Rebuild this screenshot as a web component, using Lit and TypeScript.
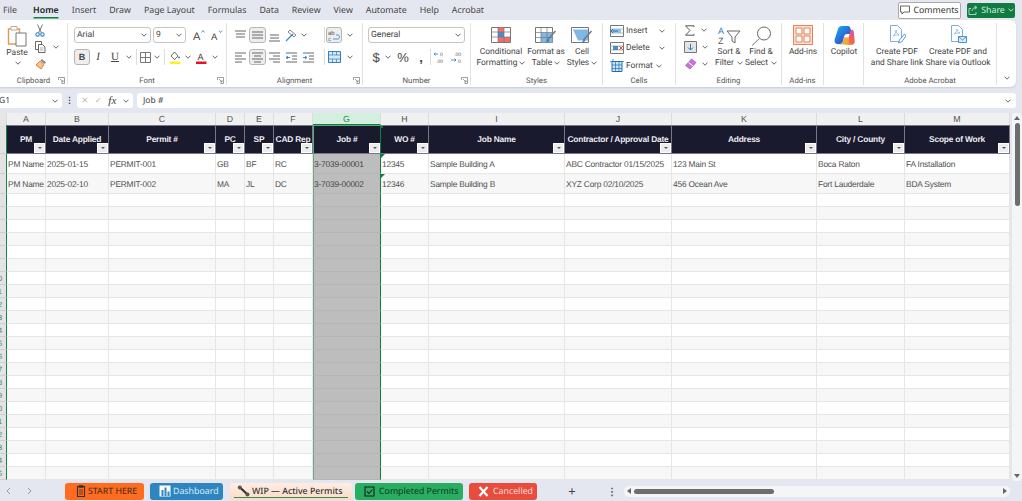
import { LitElement, html, svg, css, nothing } from 'lit';
import { customElement } from 'lit/decorators.js';

const MENU = ['File', 'Home', 'Insert', 'Draw', 'Page Layout', 'Formulas', 'Data', 'Review', 'View', 'Automate', 'Help', 'Acrobat'];

const COLS = [
    { l: 'A', w: 39, h: 'PM' },
    { l: 'B', w: 63, h: 'Date Applied' },
    { l: 'C', w: 107, h: 'Permit #' },
    { l: 'D', w: 29, h: 'PC' },
    { l: 'E', w: 29, h: 'SP' },
    { l: 'F', w: 39, h: 'CAD Rep' },
    { l: 'G', w: 68, h: 'Job #' },
    { l: 'H', w: 48, h: 'WO #' },
    { l: 'I', w: 136, h: 'Job Name' },
    { l: 'J', w: 107, h: 'Contractor / Approval Date' },
    { l: 'K', w: 145, h: 'Address' },
    { l: 'L', w: 88, h: 'City / County' },
    { l: 'M', w: 105, h: 'Scope of Work' },
];

const ROWS = [
    ['PM Name', '2025-01-15', 'PERMIT-001', 'GB', 'BF', 'RC', '3-7039-00001', '12345', 'Sample Building A', 'ABC Contractor 01/15/2025', '123 Main St', 'Boca Raton', 'FA Installation'],
    ['PM Name', '2025-02-10', 'PERMIT-002', 'MA', 'JL', 'DC', '3-7039-00002', '12346', 'Sample Building B', 'XYZ Corp 02/10/2025', '456 Ocean Ave', 'Fort Lauderdale', 'BDA System'],
];

const SEL = 6; // column G
const TEMPLATE = `7px ${COLS.map((c) => c.w + 'px').join(' ')}`;

const chev = html`<svg class="chev" width="6" height="4" viewBox="0 0 6 4"><path d="M.5.7 3 3.2 5.5.7" fill="none" stroke="#555" stroke-width=".9"/></svg>`;
const launcher = html`<svg class="launch" width="7" height="7" viewBox="0 0 7 7"><path d="M.5 3V.5H6.500V6.500H3.500M2 2l3 3M5 3v2H3" fill="none" stroke="#777" stroke-width=".7"/></svg>`;

const lines = (ys: number[][]) => html`<svg width="13" height="13" viewBox="0 0 13 13">${ys.map(([x1, x2, y]) => svg`<path d="M${x1} ${y}H${x2}" stroke="#666" stroke-width="1"/>`)}</svg>`;

const ICON = {
    paste: html`<svg width="20" height="22" viewBox="0 0 20 22"><path d="M1.500 4h11v15h-11z" fill="#fff" stroke="#e8964f" stroke-width="1.400"/><path d="M4 1.500h6V5H4z" fill="#fff" stroke="#b9aea2"/><path d="M9 8h10v13H9z" fill="#fff" stroke="#777"/></svg>`,
    cut: html`<svg width="10" height="13" viewBox="0 0 10 13"><path d="M2.500 .5 6.500 9M7.500 .5 3.500 9" stroke="#777" fill="none"/><circle cx="2.600" cy="10.500" r="1.700" fill="none" stroke="#2f7fc1" stroke-width="1.100"/><circle cx="7.400" cy="10.500" r="1.700" fill="none" stroke="#2f7fc1" stroke-width="1.100"/></svg>`,
    copy: html`<svg width="12" height="12" viewBox="0 0 12 12"><path d="M.5.5h6v8h-6z" fill="#fff" stroke="#666"/><path d="M3.500 3.500h4l2.500 2.500v5.500H3.500z" fill="#fff" stroke="#666"/><path d="M5 7h3.500M5 9h3.500" stroke="#888" stroke-width=".7"/></svg>`,
    brush: html`<svg width="12" height="12" viewBox="0 0 12 12"><path d="m7 1 4 3.500-1.500 1.500L5.500 2.500z" fill="#888"/><path d="M5 3 9 6.500 6 11 1 7z" fill="#f4c28e" stroke="#e07b22" stroke-width=".9"/></svg>`,
    growA: html`<svg width="13" height="13" viewBox="0 0 13 13"><text x="0" y="10.500" font-family="Liberation Sans" font-size="11" fill="#444">A</text><path d="m8.500 3.500 1.500-2 1.500 2" fill="none" stroke="#2f7fc1" stroke-width=".8"/></svg>`,
    shrinkA: html`<svg width="13" height="13" viewBox="0 0 13 13"><text x="0" y="10.500" font-family="Liberation Sans" font-size="9.500" fill="#444">A</text><path d="m8 1.500 1.500 2 1.500-2" fill="none" stroke="#2f7fc1" stroke-width=".8"/></svg>`,
    border: html`<svg width="11" height="11" viewBox="0 0 11 11"><path d="M.5.500h10v10H.5zM5.500.5v10M.5 5.500h10" fill="none" stroke="#777"/></svg>`,
    fill: html`<svg width="12" height="13" viewBox="0 0 12 13"><path d="M5.500 1 9 5 5.500 8.500 2 5z" fill="none" stroke="#555" stroke-width=".9"/><circle cx="10" cy="6.500" r="1" fill="#2f7fc1"/><path d="M1 10.500h10.500v2.500H1z" fill="#ffee22"/></svg>`,
    color: html`<svg width="12" height="13" viewBox="0 0 12 13"><text x="2.500" y="8.600" font-family="Liberation Sans" font-size="9" fill="#444">A</text><path d="M1 10.500h10.500v2.500H1z" fill="#e81123"/></svg>`,
    alTop: lines([[1, 12, 2], [2, 11, 5], [2, 11, 8]]),
    alMid: lines([[1, 12, 3], [1, 12, 6], [1, 12, 9]]),
    alBot: lines([[2, 11, 6], [2, 11, 9], [1, 12, 12]]),
    left: lines([[1, 12, 2], [1, 8, 5], [1, 12, 8], [1, 8, 11]]),
    center: lines([[1, 12, 2], [3, 10, 5], [1, 12, 8], [3, 10, 11]]),
    right: lines([[1, 12, 2], [5, 12, 5], [1, 12, 8], [5, 12, 11]]),
    orient: html`<svg width="13" height="13" viewBox="0 0 13 13"><path d="M1 12 8 5" stroke="#2f8fd0" stroke-width="1.200"/><path d="m5 1 6 5-2 2-6-5z" fill="none" stroke="#666" stroke-width=".8"/></svg>`,
    indDec: html`<svg width="13" height="13" viewBox="0 0 13 13"><path d="M1 2h11M7 5h5M7 8h5M1 11h11" stroke="#666"/><path d="M5 6.500H1m2-1.500-2 1.500L3 8" fill="none" stroke="#2f8fd0"/></svg>`,
    indInc: html`<svg width="13" height="13" viewBox="0 0 13 13"><path d="M1 2h11M7 5h5M7 8h5M1 11h11" stroke="#666"/><path d="M1 6.500h4m-2-1.500 2 1.500L3 8" fill="none" stroke="#2f8fd0"/></svg>`,
    wrap: html`<svg width="14" height="13" viewBox="0 0 14 13"><text x="1" y="5.500" font-family="Liberation Sans" font-size="6" fill="#555">ab</text><text x="1" y="12.200" font-family="Liberation Sans" font-size="6" fill="#2f7fc1">c</text><path d="M6 10h5c2 0 2-4 0-4H9" fill="none" stroke="#2f8fd0" stroke-width=".9"/></svg>`,
    merge: html`<svg width="13" height="12" viewBox="0 0 13 12"><path d="M.5.500h12v11H.5z" fill="#d7eaf8" stroke="#2f7fc1"/><path d="M.5 4h12M.5 8h12M4.500.5V4M8.500.5V4M4.500 8v3.500M8.500 8v3.500" stroke="#2f7fc1" stroke-width=".7"/></svg>`,
    incDec: html`<svg width="14" height="13" viewBox="0 0 14 13"><path d="M5 3H1m1.500-1.500L1 3l1.500 1.500" fill="none" stroke="#2f8fd0" stroke-width=".9"/><text x="7" y="5" font-family="Liberation Sans" font-size="5" fill="#555">0</text><text x="3" y="11.500" font-family="Liberation Sans" font-size="5" fill="#555">.00</text></svg>`,
    decDec: html`<svg width="14" height="13" viewBox="0 0 14 13"><text x="4" y="5" font-family="Liberation Sans" font-size="5" fill="#555">.00</text><path d="M1 9h5M4.500 7.500 6 9l-1.500 1.500" fill="none" stroke="#2f8fd0" stroke-width=".9"/><text x="8" y="11.500" font-family="Liberation Sans" font-size="5" fill="#555">0</text></svg>`,
    cond: html`<svg width="20" height="16" viewBox="0 0 20 16"><path d="M.5.500h19v15H.5z" fill="#fff" stroke="#777"/><path d="M7 .5h6V5H7z" fill="#f26d6d"/><path d="M7 5h6v5H7z" fill="#3f8fd2"/><path d="M7 10h12v5H7z" fill="#f26d6d"/><path d="M7 .5v15M13 .5v15M.5 5h19M.5 10h19" stroke="#777" stroke-width=".7"/></svg>`,
    table: html`<svg width="22" height="18" viewBox="0 0 22 18"><path d="M.5.500h17v15H.5z" fill="#fff" stroke="#777"/><path d="M6 5.500h11.500v10H6z" fill="#7fb7e6"/><path d="M6 .5v15M12 .5v15M.5 5.500h17M.5 10.500h17" stroke="#777" stroke-width=".7"/><path d="m20.500 4-8 9" stroke="#777" stroke-width="1.500"/><path d="m13 12-2.500 4 4-2z" fill="#2f7fc1"/></svg>`,
    styles: html`<svg width="22" height="18" viewBox="0 0 22 18"><path d="M.5.500h17v15H.5z" fill="#fff" stroke="#777"/><path d="M2 2.500h15v11H7z" fill="#7fb7e6"/><path d="m20.500 4-8 9" stroke="#777" stroke-width="1.500"/><path d="m13 12-2.500 4 4-2z" fill="#2f7fc1"/></svg>`,
    insert: html`<svg width="14" height="12" viewBox="0 0 14 12"><path d="M.5.500h13v11H.5z" fill="#fff" stroke="#777"/><path d="M.5 4h13M.5 8h13" stroke="#999" stroke-width=".7"/><path d="M3 4h8v4H3z" fill="#8cc4ee"/><path d="M8 6H1m2-2L1 6l2 2" fill="none" stroke="#1f6fb5"/></svg>`,
    del: html`<svg width="14" height="12" viewBox="0 0 14 12"><path d="M.5.500h13v11H.5z" fill="#fff" stroke="#777"/><path d="M.5 4h13M.5 8h13" stroke="#999" stroke-width=".7"/><path d="M3 4h5v4H3z" fill="#3f8fd2"/><path d="m9 4 4 4m0-4-4 4" stroke="#e04a3f"/></svg>`,
    format: html`<svg width="14" height="13" viewBox="0 0 14 13"><path d="M2 2.500h10v10H2z" fill="#cfe5f7" stroke="#1f6fb5"/><path d="M2 6h10M2 9.500h10M5.500 2.500v10M9 2.500v10M0 2.500h14M3 0v2" stroke="#1f6fb5" stroke-width=".7"/></svg>`,
    sigma: html`<svg width="12" height="11" viewBox="0 0 12 11"><path d="M10 2V.8H1.500L6 5.500 1.500 10.200H10V9" fill="none" stroke="#555"/></svg>`,
    down: html`<svg width="13" height="12" viewBox="0 0 13 12"><path d="M.5.500h12v11H.5z" fill="#e4e4e4" stroke="#777"/><path d="M6.500 3v6M4 6.500 6.500 9 9 6.500" fill="none" stroke="#1f7fc8"/></svg>`,
    clear: html`<svg width="13" height="12" viewBox="0 0 13 12"><path d="M7.500 1 12 4.500 6 11 1.500 7.500z" fill="#c774d8" stroke="#a34fb8" stroke-width=".7"/><path d="M4.500 4.500 9 8" stroke="#fff"/></svg>`,
    sort: html`<svg width="23" height="20" viewBox="0 0 23 20"><text x="0" y="8.200" font-family="Liberation Sans" font-size="9" fill="#2f7fc1">A</text><text x="0" y="18" font-family="Liberation Sans" font-size="9" fill="#555">Z</text><path d="M9 5h13l-5 6v6l-3-2v-4z" fill="#fff" stroke="#666"/></svg>`,
    find: html`<svg width="21" height="20" viewBox="0 0 21 20"><circle cx="13" cy="7.500" r="6.500" fill="#fff" stroke="#666"/><path d="M8.500 12.500 1 19.500" stroke="#777" stroke-width="1"/></svg>`,
    addins: html`<svg width="20" height="20" viewBox="0 0 20 20"><path d="M.5.500h19v19H.5z" fill="#fde3d6" stroke="#ec7f55"/><path d="M3 3h6v6H3zM11 3h6v6h-6zM3 11h6v6H3zM11 11h6v6h-6z" fill="#fff" stroke="#ec7f55"/></svg>`,
    copilot: html`<svg width="21" height="21" viewBox="0 0 21 21"><defs><linearGradient id="cpa" x1="0" y1="0" x2="1" y2="1"><stop offset="0" stop-color="#19b4e8"/><stop offset=".6" stop-color="#2c62d8"/><stop offset="1" stop-color="#6b3fd0"/></linearGradient><linearGradient id="cpb" x1="0" y1="1" x2="1" y2="0"><stop offset="0" stop-color="#f0d23a"/><stop offset=".4" stop-color="#ee6a4a"/><stop offset="1" stop-color="#d84fb0"/></linearGradient></defs><path d="M8 1h6c1.500 0 2 1 2.500 2.500L18 9h-5c-2 0-2.500 1-3 3l-1 4c-.5 2-1.500 3-3 3H4C1.500 19 0 17 .8 14L4 4c.6-2 2-3 4-3z" fill="url(#cpa)"/><path d="M11 20h6c2 0 3.200-1 3.800-3l-1-10c-.4-2-1.500-2.500-2.500-2-1.300.6-1.300 3-2.300 6l-1.500 5c-.5 1.500-1.500 2.500-2.500 4z" fill="url(#cpb)"/><path d="M3 19c3 .5 5 .5 8 .5 2 0 3-1 3.500-3l1-4H10l-1 4c-.5 2-2 2.500-6 2.500z" fill="#f0a93a"/></svg>`,
    pdfLink: html`<svg width="18" height="19" viewBox="0 0 18 19"><path d="M2.500.5h7l4 4v12h-11z" fill="#fff" stroke="#7aaee0"/><path d="M5 11c2-1 3-4 3-6 0 2 1 4 3 5-2 0-4 0-6 1z" fill="none" stroke="#7aaee0" stroke-width=".7"/><path d="m16.500 9-5 6-1 3 3-1 4.500-6z" fill="#fff" stroke="#4d8fd0" stroke-width=".9"/></svg>`,
    pdfMail: html`<svg width="18" height="19" viewBox="0 0 18 19"><path d="M2.500.5h7l4 4v12h-11z" fill="#fff" stroke="#7aaee0"/><path d="M5 9c2-1 3-4 3-5 0 2 1 3 3 4-2 0-4 0-6 1z" fill="none" stroke="#7aaee0" stroke-width=".7"/><path d="M9.500 11.500h8v6h-8z" fill="#dcebf8" stroke="#4d8fd0"/><path d="m9.500 11.500 4 3.500 4-3.500" fill="none" stroke="#4d8fd0"/></svg>`,
    comment: html`<svg width="10" height="10" viewBox="0 0 10 10"><path d="M.5 1h9v6H4L2 9V7H.5z" fill="none" stroke="#444" stroke-width=".8"/></svg>`,
    share: html`<svg width="10" height="10" viewBox="0 0 10 10"><path d="M3 3.500H1v6h7V7M4 6c0-2 1.500-3.500 4-3.500M6.500.8 9 2.500 6.500 4.300" fill="none" stroke="#cfe8da" stroke-width=".8"/></svg>`,
    tabClip: html`<svg width="10" height="12" viewBox="0 0 10 12"><path d="M1.500 1.500h7v10h-7z" fill="none" stroke="#333" stroke-width="1.100"/><path d="M3 .5h4v2H3zM3 5h4M3 7h4M3 9h4" fill="none" stroke="#333" stroke-width=".8"/></svg>`,
    tabChart: html`<svg width="12" height="12" viewBox="0 0 12 12"><path d="M.5.500h11v11H.5z" fill="#fff"/><path d="M2.500 5h2v6h-2zM5.500 2.500h2V11h-2zM8.500 6.500h2V11h-2z" fill="#2e86c1"/></svg>`,
    tabTool: html`<svg width="13" height="12" viewBox="0 0 13 12"><path d="m3 2.500 7.500 7" stroke="#333" stroke-width="2.200"/><circle cx="2.800" cy="2.500" r="2" fill="#555"/><circle cx="10.500" cy="9.500" r="2" fill="#555"/></svg>`,
    tabCheck: html`<svg width="11" height="11" viewBox="0 0 11 11"><path d="M1 1h9v9H1z" fill="none" stroke="#1d1d1d" stroke-width="1.100"/><path d="m3 5.500 2 2 3.500-4" fill="none" stroke="#1d1d1d" stroke-width="1.100"/></svg>`,
    tabX: html`<svg width="11" height="11" viewBox="0 0 11 11"><path d="m1.500 1 8 9m0-9-8 9" stroke="#fff" stroke-width="2.200"/></svg>`,
};

@customElement('app-root')
export class AppRoot extends LitElement {
    static styles = css`
        :host { display: block; width: 1022px; height: 501px; overflow: hidden; background: #e4e7ef; font-family: "Noto Sans", sans-serif; color: #444; text-rendering: geometricPrecision; }
        .top { display: flex; align-items: center; height: 20px; padding-left: 3px; font-size: 8.800px; }
        .menu { display: flex; gap: 13px; flex: 1; }
        .menu span { padding-bottom: 1px; }
        .menu .on { margin-left: 3px; color: #222; font-weight: 600; box-shadow: 0 2px 0 -0.5px #107c41; }
        .btn { display: flex; align-items: center; justify-content: center; gap: 3px; height: 15px; border-radius: 2px; }
        .comments { width: 61px; background: #fff; border: 1px solid #aaa; color: #333; margin-right: 6px; }
        .share { width: 48px; background: #107c41; color: #d9eee2; margin-right: 7px; }
        .share .chev path { stroke: #d9eee2; }

        .ribbon { display: flex; height: 67px; width: 1016px; padding-top: 3px; box-sizing: border-box; background: #fff; border-radius: 0 6px 6px 0; box-shadow: 0 1px 2px #c9ccd4; font-family: Roboto, "Noto Sans", sans-serif; font-size: 8.400px; }
        .grp { display: flex; flex-direction: column; height: 62px; border-right: 1px solid #e2e2e2; box-sizing: border-box; }
        .g-clip { width: 68px; } .g-font { width: 159px; } .g-align { width: 136px; } .g-num { width: 108px; }
        .g-styles { width: 132px; } .g-cells { width: 73px; } .g-edit { width: 106px; } .g-add { width: 42px; }
        .g-cop { width: 40px; } .g-acro { width: 133px; }
        .body { flex: 1; display: flex; min-height: 0; }
        .lab { display: grid; grid-template-columns: 1fr auto 1fr; align-items: center; height: 10px; color: #555; font-size: 7.800px; }
        .lab span { grid-column: 2; }
        .launch { grid-column: 3; justify-self: end; margin-right: 2px; }

        .pad-clip { padding: 2px 0 0 6px; gap: 7px; }
        .pad-row { flex-direction: column; padding-top: 4px; gap: 6px; }
        .g-font .pad-row { padding-left: 6px; }
        .g-align .pad-row { padding-left: 5px; }
        .g-num .pad-row { padding-left: 5px; }
        .paste { display: flex; flex-direction: column; align-items: center; width: 22px; line-height: 11px; }
        .paste span { margin-top: 1px; }
        .paste .chev { margin-top: 2px; }
        .stack { display: flex; flex-direction: column; margin-top: -1.500px; }
        .pad-clip .stack { margin-top: -3.500px; }
        .pad-clip .chev { margin-left: 2px; }
        .stack > div { display: flex; align-items: center; height: 17px; gap: 4px; }

        .row { display: flex; align-items: center; height: 16px; }
        .sel { display: flex; align-items: center; justify-content: space-between; box-sizing: border-box; height: 16px; padding: 0 3px 0 2px; background: #fff; border: 1px solid #c4c4c4; border-radius: 3px; font-size: 8.600px; }
        .s-font { width: 77px; margin-right: 2px; } .s-size { width: 33px; margin-right: 4px; } .s-num { width: 97px; }
        .c { display: flex; align-items: center; justify-content: center; height: 16px; flex: none; box-sizing: border-box; }
        .w4 { width: 4px; } .w5 { width: 5px; } .w8 { width: 8px; } .w10 { width: 10px; } .w14 { width: 14px; } .w16 { width: 16px; }
        .w17 { width: 17px; } .w18 { width: 18px; } .w22 { width: 22px; }
        .on-box { background: #eeeeee; border: 1px solid #b5b5b5; border-radius: 3px; }
        .sep::before { content: ""; width: 1px; height: 16px; background: #ddd; }
        .glyph { font-family: "Liberation Serif", serif; font-size: 11px; color: #444; }
        .bold { font-family: "Liberation Sans", sans-serif; font-weight: 700; font-size: 9px; }
        .under { text-decoration: underline; }
        .num-g { font-family: "Liberation Sans", sans-serif; font-size: 13px; color: #444; }

        .big { display: flex; flex-direction: column; align-items: center; padding-top: 2px; line-height: 11px; white-space: nowrap; flex: none; }
        .big .i { display: flex; align-items: flex-start; justify-content: center; height: 22px; box-sizing: border-box; }
        .g-styles .big .i { padding-top: 2px; }
        .g-edit .big .i { padding-top: 1px; }
        .g-styles .body { padding-left: 3px; }
        .b54 { width: 54px; } .b36 { width: 36px; } .b32 { width: 32px; } .b42 { width: 42px; } .b40 { width: 40px; } .b62 { width: 62px; } .b60 { width: 60px; }
        .g-acro .body { padding-left: 2px; }
        .cells { flex-direction: column; padding: 0 0 0 7px; }
        .cells > div { display: flex; align-items: center; height: 17.500px; gap: 2px; margin-top: 0; }
        .cells > div:first-child { margin-top: -1px; }
        .cells .chev { margin-left: auto; margin-right: 10px; }
        .cells .chev.near { margin-left: 1px; }
        .edit-col { width: 37px; padding-left: 8px; box-sizing: border-box; flex: none; }
        .g-edit .chev { margin-left: 1px; }
        .tail { flex: 1; display: flex; align-items: flex-end; justify-content: flex-end; padding: 0 6px 7px 0; }

        .fbar { display: flex; align-items: center; height: 15px; margin-top: 6px; gap: 3px; font-size: 8.500px; }
        .name { display: flex; align-items: center; justify-content: space-between; width: 62px; height: 15px; box-sizing: border-box; padding: 0 4px 0 0; background: #fff; border-radius: 0 3px 3px 0; }
        .name span { margin-left: -1px; }
        .dots { width: 9px; text-align: center; font-weight: 700; }
        .fx { display: flex; align-items: center; justify-content: space-around; width: 56px; height: 15px; background: #fff; border-radius: 3px; box-sizing: border-box; padding: 0 1px; color: #bbb; }
        .fx i { font-family: "Liberation Serif", serif; font-size: 11px; color: #333; }
        .input { display: flex; align-items: center; justify-content: space-between; width: 879px; height: 15px; margin-left: 1px; box-sizing: border-box; padding: 0 5px 0 6px; background: #fff; border-radius: 3px; }

        .sheet { display: flex; margin-top: 5px; height: 368px; }
        .grid { display: grid; width: 1010px; align-content: start; overflow: hidden; font-family: "Liberation Sans", Arial, sans-serif; font-size: 8.400px; letter-spacing: -0.200px; color: #505050; }
        .ch { height: 12px; background: #f0f0f0; border-right: 1px solid #dcdcdc; box-sizing: border-box; text-align: center; line-height: 12px; color: #555; font-size: 8.800px; letter-spacing: 0; }
        .ch.corner { background: #e6e6e6; }
        .ch.active { background: #d3f0df; color: #2b8a5a; border-bottom: 1px solid #107c41; }
        .rh { background: #e3e3e3; border-right: 1.500px solid #1f7f4f; box-sizing: border-box; overflow: hidden; font-size: 7.500px; color: #4a7f63; border-bottom: 1px solid #cfcfcf; display: flex; align-items: center; }
        .rh span { flex: none; width: 20px; margin-left: -12px; text-align: center; }
        .hd { position: relative; display: flex; align-items: center; justify-content: center; height: 29px; box-sizing: border-box; padding-bottom: 1px; background: #1a1a2e; color: #eceaf0; font-weight: 700; white-space: nowrap; border-right: 1px solid #77778a; border-top: 1px solid #77778a; border-bottom: 1px solid #77778a; overflow: hidden; }
        .hd.cur { border-left: 1px solid #5fa77e; border-right: 1px solid #107c41; border-top: 1px solid #5fa77e; }
        .hd.next::before { content: ""; position: absolute; left: 0; top: 0; width: 2px; height: 2px; background: #107c41; }
        .flt { position: absolute; right: 0; bottom: 0; display: flex; align-items: center; justify-content: center; width: 11px; height: 10px; box-sizing: border-box; background: #ececec; border: 1px solid #fff; }
        .flt::after { content: ""; border: 2px solid transparent; border-top: 2.500px solid #555; border-bottom: 0; }
        .td { position: relative; display: flex; align-items: center; box-sizing: border-box; padding-left: 1px; white-space: nowrap; overflow: hidden; background: #fff; border-right: 1px solid #e6e6e6; border-bottom: 1px solid #e6e6e6; }
        .td.alt { background: #f7f7f7; }
        .td.cur { padding-left: 0; color: #454545; background: #bdbdbd; border-left: 1px solid #6aa886; border-right: 1px solid #107c41; border-bottom-color: #b5b5b5; }
        .td.tri::before { content: ""; position: absolute; left: 0; top: 0; border: 2.500px solid transparent; border-top-color: #107c41; border-left-color: #107c41; }
        .r20 { height: 20px; padding-top: 1px; } .r13 { height: 13px; }
        .vbar { display: flex; flex-direction: column; align-items: center; width: 10px; height: 368px; margin-left: 2px; background: #f4f5f7; border-radius: 4px; box-sizing: border-box; padding-top: 3px; }
        .tup { border: 3px solid transparent; border-bottom: 4px solid #666; border-top: 0; }
        .tdn { border: 3px solid transparent; border-top: 4px solid #666; border-bottom: 0; margin-top: auto; margin-bottom: 3px; }
        .vthumb { width: 5px; height: 83px; margin-top: 3px; background: #6e6e6e; border-radius: 3px; }

        .tabs { display: flex; align-items: center; height: 20px; font-size: 8.800px; white-space: nowrap; }
        .nav { display: flex; align-items: center; justify-content: space-between; width: 26px; margin: 0 33px 0 6px; }
        .tab { position: relative; display: flex; align-items: center; height: 17px; border-radius: 3px; box-sizing: border-box; flex: none; gap: 2px; }
        .t-start { width: 79px; margin-right: 6px; padding-left: 11px; background: #ff6b1f; color: #3a2a20; }
        .t-dash { width: 73px; margin-right: 7px; padding-left: 9px; background: #2e86c1; color: #dcecf8; }
        .t-wip { width: 122px; margin-right: 3px; padding-left: 7px; background: linear-gradient(#fdeee5, #fcd9c4); color: #333; font-weight: 500; }
        .t-wip::after { content: ""; position: absolute; left: 4px; right: 4px; bottom: 2px; height: 1px; background: #2f8f5b; }
        .t-done { width: 108px; margin-right: 6px; padding-left: 9px; gap: 4px; background: #27ae60; color: #12351f; }
        .t-can { width: 68px; padding-left: 9px; gap: 4px; background: #e74c3c; color: #f8dcd8; }
        .plus { width: 70px; text-align: center; font-size: 13px; color: #444; }
        .tdots { width: 8px; margin-right: 9px; text-align: center; font-weight: 700; font-size: 10px; color: #555; }
        .hbar { display: flex; align-items: center; width: 386px; height: 11px; background: #f4f5f7; border-radius: 5px; box-sizing: border-box; padding: 0 3px; flex: none; }
        .tl { border: 3px solid transparent; border-right: 4px solid #666; border-left: 0; }
        .hthumb { width: 140px; height: 5px; margin-left: 3px; background: #6e6e6e; border-radius: 3px; }
        .tr { border: 3px solid transparent; border-left: 4px solid #666; border-right: 0; margin-left: auto; }
    `;

    private _top() {
        return html`<div class="top">
            <div class="menu">${MENU.map((m) => html`<span class=${m === 'Home' ? 'on' : ''}>${m}</span>`)}</div>
            <div class="btn comments">${ICON.comment}<span>Comments</span></div>
            <div class="btn share">${ICON.share}<span>Share</span>${chev}</div>
        </div>`;
    }

    private _label(t: string, launch = false) {
        return html`<div class="lab"><span>${t}</span>${launch ? launcher : nothing}</div>`;
    }

    private _big(cls: string, icon: unknown, a: string, b?: string, withChev = false) {
        return html`<div class="big ${cls}"><div class="i">${icon}</div><div>${a}</div>${b ? html`<div>${b} ${withChev ? chev : nothing}</div>` : nothing}</div>`;
    }

    private _ribbon() {
        return html`<div class="ribbon">
            <div class="grp g-clip">
                <div class="body pad-clip">
                    <div class="paste">${ICON.paste}<span>Paste</span>${chev}</div>
                    <div class="stack"><div>${ICON.cut}</div><div>${ICON.copy}${chev}</div><div>${ICON.brush}</div></div>
                </div>
                ${this._label('Clipboard', true)}
            </div>
            <div class="grp g-font">
                <div class="body pad-row">
                    <div class="row">
                        <div class="sel s-font"><span>Arial</span>${chev}</div>
                        <div class="sel s-size"><span>9</span>${chev}</div>
                        <div class="c w18">${ICON.growA}</div><div class="c w18">${ICON.shrinkA}</div>
                    </div>
                    <div class="row">
                        <div class="c w16 on-box bold">B</div>
                        <div class="c w16 glyph"><i>I</i></div>
                        <div class="c w18 glyph under">U</div>
                        <div class="c w10">${chev}</div>
                        <div class="c w4 sep"></div>
                        <div class="c w14">${ICON.border}</div>
                        <div class="c w10">${chev}</div>
                        <div class="c w4 sep"></div>
                        <div class="c w18">${ICON.fill}</div>
                        <div class="c w8">${chev}</div>
                        <div class="c w18">${ICON.color}</div>
                        <div class="c w10">${chev}</div>
                    </div>
                </div>
                ${this._label('Font', true)}
            </div>
            <div class="grp g-align">
                <div class="body pad-row">
                    <div class="row">
                        <div class="c w17">${ICON.alTop}</div><div class="c w17 on-box">${ICON.alMid}</div><div class="c w17">${ICON.alBot}</div>
                        <div class="c w17">${ICON.orient}</div><div class="c w8">${chev}</div><div class="c w14"></div>
                        <div class="c w4 sep"></div><div class="c w16 on-box">${ICON.wrap}</div><div class="c w16">${chev}</div>
                    </div>
                    <div class="row">
                        <div class="c w17">${ICON.left}</div><div class="c w17 on-box">${ICON.center}</div><div class="c w17">${ICON.right}</div>
                        <div class="c w17">${ICON.indDec}</div><div class="c w17">${ICON.indInc}</div><div class="c w5"></div>
                        <div class="c w4 sep"></div><div class="c w16">${ICON.merge}</div><div class="c w16">${chev}</div>
                    </div>
                </div>
                ${this._label('Alignment', true)}
            </div>
            <div class="grp g-num">
                <div class="body pad-row">
                    <div class="row"><div class="sel s-num"><span>General</span>${chev}</div></div>
                    <div class="row">
                        <div class="c w16 num-g">$</div><div class="c w8">${chev}</div>
                        <div class="c w22 num-g">%</div><div class="c w14 num-g"><b>,</b></div>
                        <div class="c w4 sep"></div>
                        <div class="c w16">${ICON.incDec}</div><div class="c w18">${ICON.decDec}</div>
                    </div>
                </div>
                ${this._label('Number', true)}
            </div>
            <div class="grp g-styles">
                <div class="body">
                    ${this._big('b54', ICON.cond, 'Conditional', 'Formatting', true)}
                    ${this._big('b36', ICON.table, 'Format as', 'Table', true)}
                    ${this._big('b36', ICON.styles, 'Cell', 'Styles', true)}
                </div>
                ${this._label('Styles')}
            </div>
            <div class="grp g-cells">
                <div class="body cells">
                    <div>${ICON.insert}<span>Insert</span>${chev}</div>
                    <div>${ICON.del}<span>Delete</span>${chev}</div>
                    <div>${ICON.format}<span>Format</span><svg class="chev near" width="6" height="4" viewBox="0 0 6 4"><path d="M.5.7 3 3.2 5.5.7" fill="none" stroke="#555" stroke-width=".9"/></svg></div>
                </div>
                ${this._label('Cells')}
            </div>
            <div class="grp g-edit">
                <div class="body">
                    <div class="stack edit-col">
                        <div>${ICON.sigma}${chev}</div><div>${ICON.down}${chev}</div><div>${ICON.clear}${chev}</div>
                    </div>
                    ${this._big('b32', ICON.sort, 'Sort &', 'Filter', true)}
                    ${this._big('b32', ICON.find, 'Find &', 'Select', true)}
                </div>
                ${this._label('Editing')}
            </div>
            <div class="grp g-add">
                <div class="body">${this._big('b42', ICON.addins, 'Add-ins')}</div>
                ${this._label('Add-ins')}
            </div>
            <div class="grp g-cop">
                <div class="body">${this._big('b40', ICON.copilot, 'Copilot')}</div>
            </div>
            <div class="grp g-acro">
                <div class="body">
                    ${this._big('b62', ICON.pdfLink, 'Create PDF', 'and Share link')}
                    ${this._big('b60', ICON.pdfMail, 'Create PDF and', 'Share via Outlook')}
                </div>
                ${this._label('Adobe Acrobat')}
            </div>
            <div class="tail">${chev}</div>
        </div>`;
    }

    private _formula() {
        return html`<div class="fbar">
            <div class="name"><span>G1</span>${chev}</div>
            <div class="dots">⋮</div>
            <div class="fx"><span>✕</span><span>✓</span><i>fx</i>${chev}</div>
            <div class="input"><span>Job #</span>${chev}</div>
        </div>`;
    }

    private _grid() {
        const rows = [];
        rows.push(html`<div class="ch corner"></div>`);
        COLS.forEach((c, i) => rows.push(html`<div class="ch ${i === SEL ? 'active' : ''}">${c.l}</div>`));
        rows.push(html`<div class="rh"></div>`);
        COLS.forEach((c, i) => rows.push(html`<div class="hd ${i === SEL ? 'cur' : ''} ${i === SEL + 1 ? 'next' : ''}">${c.h}<span class="flt"></span></div>`));
        for (let r = 0; r < 24; r++) {
            const n = r + 2;
            const data = ROWS[r];
            const size = r < 2 ? 'r20' : 'r13';
            rows.push(html`<div class="rh ${size}"><span>${n >= 10 ? n : ''}</span></div>`);
            COLS.forEach((_, i) => {
                const cls = ['td', size, r % 2 ? 'alt' : '', i === SEL ? 'cur' : '', i === SEL + 1 && data ? 'tri' : ''].join(' ');
                rows.push(html`<div class=${cls}>${data ? data[i] : ''}</div>`);
            });
        }
        return html`<div class="sheet">
            <div class="grid" style="grid-template-columns:${TEMPLATE}">${rows}</div>
            <div class="vbar"><span class="tup"></span><span class="vthumb"></span><span class="tdn"></span></div>
        </div>`;
    }

    private _tabs() {
        return html`<div class="tabs">
            <div class="nav">
                <svg width="5" height="8" viewBox="0 0 5 8"><path d="M4 1 1 4l3 3" fill="none" stroke="#999"/></svg>
                <svg width="5" height="8" viewBox="0 0 5 8"><path d="m1 1 3 3-3 3" fill="none" stroke="#999"/></svg>
            </div>
            <div class="tab t-start">${ICON.tabClip}<span>START HERE</span></div>
            <div class="tab t-dash">${ICON.tabChart}<span>Dashboard</span></div>
            <div class="tab t-wip">${ICON.tabTool}<span>WIP — Active Permits</span></div>
            <div class="tab t-done">${ICON.tabCheck}<span>Completed Permits</span></div>
            <div class="tab t-can">${ICON.tabX}<span>Cancelled</span></div>
            <div class="plus">+</div>
            <div class="tdots">⋮</div>
            <div class="hbar"><span class="tl"></span><span class="hthumb"></span><span class="tr"></span></div>
        </div>`;
    }

    render() {
        return html`${this._top()}${this._ribbon()}${this._formula()}${this._grid()}${this._tabs()}`;
    }
}

declare global { interface HTMLElementTagNameMap { 'app-root': AppRoot; } }
